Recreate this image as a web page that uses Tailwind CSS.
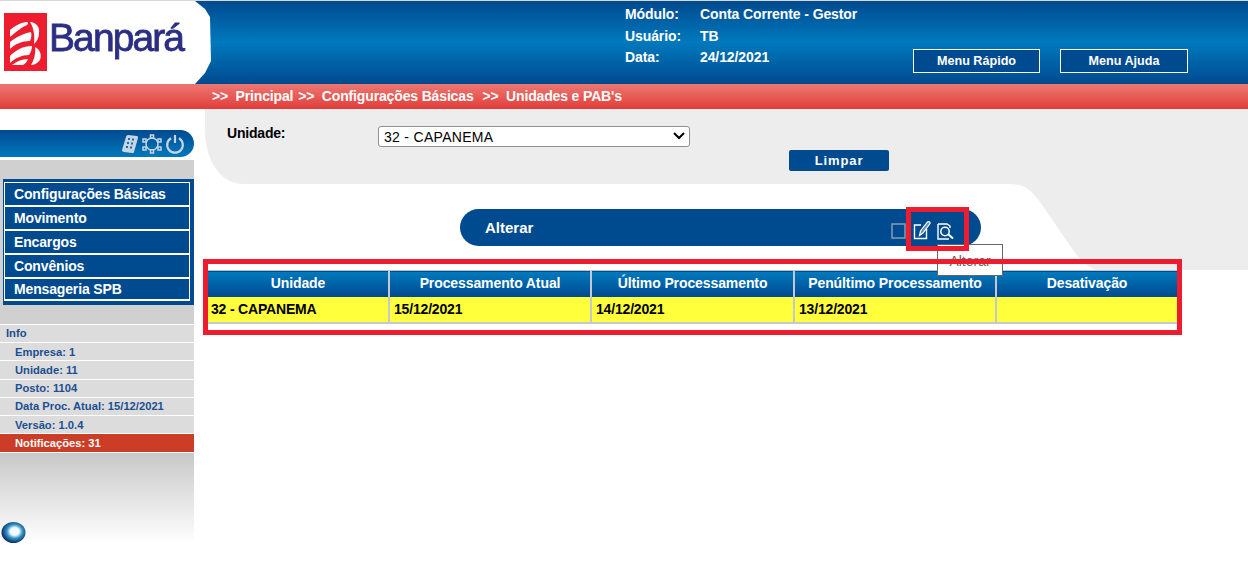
<!DOCTYPE html>
<html lang="en">
<head>
    <meta charset="UTF-8">
    <title>Unidades e PAB's</title>
    <script src="https://cdn.jsdelivr.net/npm/@tailwindcss/browser@4"></script>
</head>
<body class="w-[1248px] h-[561px] overflow-hidden bg-white font-['Liberation_Sans',sans-serif]">
    <!-- header -->
    <header class="h-[84px] border-t border-[#d8d8d8] bg-gradient-to-b from-[#004a8f] via-[#0079bd] to-[#004a8f] flex">
        <div class="w-[211px] bg-white [clip-path:polygon(0_0,195px_0,205px_8px,210px_16px,211px_60px,205px_72px,195px_83px,0_83px)] flex items-start pl-[4px] pt-[12px] shrink-0">
            <svg class="w-[43px] h-[58px] shrink-0" viewBox="0 0 43 58">
                <rect width="43" height="58" fill="#ed1c2e"/>
                <g fill="#fff">
                    <path d="M6 17 C10 13 16 10 22 9 C24 9 25 10 23 12 C18 14 12 19 6 24 Z"/>
                    <path d="M26 9 C32 9 36 14 35 20 C35 25 33 28 30 31 C31 24 30 15 26 9 Z"/>
                    <path d="M6 29 C11 25 18 21 27 19 C28 22 27 26 26 28 C18 28 11 31 6 36 Z"/>
                    <path d="M6 43 C12 37 19 33 28 33 C28 36 27 39 25 42 C18 42 11 45 6 50 Z"/>
                    <path d="M31 34 C36 36 38 42 36 47 C34 50 30 52 27 52 C30 47 32 40 31 34 Z"/>
                    <path d="M8 52 C13 48 18 46 24 46 C23 49 21 51 19 52 Z"/>
                </g>
            </svg>
            <span class="ml-[2px] mt-[2px] text-[39px] leading-[46px] tracking-[-1.9px] text-[#2b2e83] blur-[0.4px] [-webkit-text-stroke:0.8px_#2b2e83]">Banpará</span>
        </div>
        <div class="ml-[414px] pt-[3px] w-[270px] text-[14px] tracking-[-0.1px] font-bold text-white shrink-0">
            <div class="flex h-[21px] items-center"><span class="w-[75px]">Módulo:</span><span>Conta Corrente - Gestor</span></div>
            <div class="flex h-[22px] items-center"><span class="w-[75px]">Usuário:</span><span>TB</span></div>
            <div class="flex h-[21px] items-center"><span class="w-[75px]">Data:</span><span>24/12/2021</span></div>
        </div>
        <div class="ml-[18px] mt-[48px] flex gap-[20px] text-[12.6px] font-bold text-white">
            <button class="w-[127px] h-[24px] bg-[#004a8f] border border-white">Menu Rápido</button>
            <button class="w-[128px] h-[24px] bg-[#004a8f] border border-white">Menu Ajuda</button>
        </div>
    </header>

    <!-- breadcrumb -->
    <nav class="h-[25px] pl-[212px] bg-gradient-to-b from-[#ec7672] to-[#e03b38] flex items-center gap-[5px] text-[14px] tracking-[-0.15px] font-bold text-white whitespace-pre">
        <span>&gt;&gt;  Principal</span>
        <span>&gt;&gt;  Configurações Básicas</span>
        <span class="ml-[4px]">&gt;&gt;  Unidades e PAB's</span>
    </nav>

    <div class="flex">
        <!-- sidebar -->
        <aside class="w-[194px] shrink-0 pt-[21px]">
            <div class="h-[27px] rounded-r-[14px] bg-gradient-to-b from-[#004a8f] to-[#0079bd] flex items-center justify-end pr-[9px] gap-[3px]">
                <svg class="w-[18px] h-[20px]" viewBox="0 0 18 20">
                    <path d="M7 1 L16 2 C17 2 17 3 17 4 L13 18 C13 19 12 19 11 19 L3 18 C2 18 1 17 1 16 L5 3 C5 2 6 1 7 1 Z" fill="#c4d6e6"/>
                    <path d="M7 5 L9 5 M11 5.500 L13 5.500 M6 9 L8 9 M10 9.500 L12 9.500 M5 13 L7 13 M9 13.500 L11 13.500" stroke="#1f6ba8" stroke-width="2"/>
                </svg>
                <svg class="w-[20px] h-[20px]" viewBox="0 0 20 20" fill="none" stroke="#c4d6e6" stroke-width="1.500">
                    <circle cx="10" cy="10" r="6"/>
                    <rect x="8.500" y="1" width="3" height="3" fill="#0a5c9f"/>
                    <rect x="16" y="5" width="3" height="3" fill="#0a5c9f"/>
                    <rect x="16" y="13" width="3" height="3" fill="#0a5c9f"/>
                    <rect x="8.500" y="16" width="3" height="3" fill="#0a5c9f"/>
                    <rect x="1" y="13" width="3" height="3" fill="#0a5c9f"/>
                    <rect x="1" y="5" width="3" height="3" fill="#0a5c9f"/>
                </svg>
                <svg class="w-[20px] h-[20px]" viewBox="0 0 20 20" fill="none" stroke="#c4d6e6" stroke-width="2.200">
                    <path d="M6 4.200 A7.800 7.800 0 1 0 14 4.200"/>
                    <path d="M10 1 V9"/>
                </svg>
            </div>
            <div class="mt-[3px] pt-[19px] pb-[19px] bg-[#d0d0d0]">
                <ul class="ml-[3px] pl-[1px] pr-[4px] pt-[3px] pb-[4px] bg-[#004a8f] text-[14px] tracking-[-0.15px] font-bold text-white">
                    <li class="h-[25px] pl-[9px] flex items-center border-x border-t border-b-2 border-white">Configurações Básicas</li>
                    <li class="h-[24px] pl-[9px] pt-[1px] flex items-center border-x border-b-2 border-white">Movimento</li>
                    <li class="h-[24px] pl-[9px] pt-[1px] flex items-center border-x border-b-2 border-white">Encargos</li>
                    <li class="h-[24px] pl-[9px] pt-[1px] flex items-center border-x border-b-2 border-white">Convênios</li>
                    <li class="h-[22px] pl-[9px] flex items-center border-x border-b-2 border-white">Mensageria SPB</li>
                </ul>
            </div>
            <ul class="text-[11.2px] font-bold text-[#1b4f90] bg-white">
                <li class="h-[18px] pl-[6px] pb-[1px] flex items-center border-t border-white bg-[#dcdcdc]">Info</li>
                <li class="h-[18px] pl-[15px] pt-[1px] flex items-center border-t border-white bg-[#dcdcdc]">Empresa: 1</li>
                <li class="h-[19px] pl-[15px] flex items-center border-t border-white bg-[#dcdcdc]">Unidade: 11</li>
                <li class="h-[18px] pl-[15px] pb-[1px] flex items-center border-t border-white bg-[#dcdcdc]">Posto: 1104</li>
                <li class="h-[18px] pl-[15px] pb-[1px] flex items-center border-t border-white bg-[#dcdcdc]">Data Proc. Atual: 15/12/2021</li>
                <li class="h-[18px] pl-[15px] pt-[1px] flex items-center border-t border-white bg-[#dcdcdc]">Versão: 1.0.4</li>
                <li class="h-[20px] pl-[15px] flex items-center border-y border-white bg-[#cc3d27] text-white">Notificações: 31</li>
            </ul>
            <div class="h-[90px] bg-gradient-to-b from-[#c8c8c8] to-white flex items-end pl-[1px]">
                <svg class="w-[25px] h-[21px]" viewBox="0 0 25 21">
                    <defs>
                        <radialGradient id="orb" cx="0.55" cy="0.45" r="0.6">
                            <stop offset="0.3" stop-color="#f2fafd"/>
                            <stop offset="0.55" stop-color="#2f94c2"/>
                            <stop offset="0.9" stop-color="#0b2f6e"/>
                        </radialGradient>
                    </defs>
                    <ellipse cx="12.500" cy="10.500" rx="12" ry="10.500" fill="url(#orb)"/>
                </svg>
            </div>
        </aside>

        <!-- content -->
        <main class="relative flex-1 h-[452px]">
            <svg class="absolute top-0 left-0 w-[1054px] h-[161px]" viewBox="0 0 1054 161">
                <path d="M11 0 H1054 V161 H906 C896 161 888 152 881 144 L846 93 C836 80 830 75 816 75 H50 C25 75 11 50 11 20 Z" fill="#ededed"/>
            </svg>

            <form class="relative h-[100px] pt-[16px] pl-[33px]">
                <div class="flex items-start">
                    <label class="w-[151px] text-[14px] tracking-[-0.2px] font-bold text-black leading-[16px]">Unidade:</label>
                    <div class="relative w-[312px] h-[21px]">
                        <select class="appearance-none w-full h-full pl-[5px] pb-[2px] bg-white border border-[#8f8f8f] rounded-[3px] text-[14px] tracking-[0.3px] text-black">
                            <option>32 - CAPANEMA</option>
                        </select>
                        <svg class="absolute right-[5px] top-[6px] w-[12px] h-[9px]" viewBox="0 0 12 9" fill="none" stroke="#000" stroke-width="2">
                            <path d="M1 2 L6 7 L11 2"/>
                        </svg>
                    </div>
                </div>
                <button type="button" class="block ml-[562px] mt-[4px] w-[100px] h-[21px] bg-[#004a8f] rounded-[2px] text-[13px] font-bold tracking-[0.9px] text-white">Limpar</button>
            </form>

            <div class="relative ml-[266px] w-[521px] h-[37px] rounded-full bg-[#004a8f] flex items-center pl-[25px] pt-[1px] text-[15px] font-bold text-white">
                <span>Alterar</span>
                <div class="ml-auto mr-[26px] mt-[3px] flex items-center">
                    <svg class="w-[15px] h-[17px] mt-[1px]" viewBox="0 0 15 17" fill="none">
                        <rect x="1" y="2" width="13" height="14" stroke="#7f97ae" stroke-width="1.600"/>
                    </svg>
                    <svg class="ml-[7px] w-[18px] h-[20px]" viewBox="0 0 18 20" fill="none" stroke="#fff">
                        <path d="M8 5 H1.500 V18.500 H13.500 V9" stroke-width="1.400"/>
                        <path d="M6.500 15.500 L7.500 11 L14.500 2 C15.500 1 17.500 2 17 3.500 L10 13 Z" fill="#5f8db8" stroke-width="1.200"/>
                    </svg>
                    <svg class="ml-[6px] w-[18px] h-[20px]" viewBox="0 0 18 20" fill="none" stroke="#fff">
                        <path d="M1 4 H10 L13 6 V8 M1 4 V19 H12" stroke-width="1.400"/>
                        <circle cx="8" cy="11.500" r="4.200" stroke-width="1.500"/>
                        <path d="M11.500 14.500 L16 18.500" stroke-width="2"/>
                    </svg>
                </div>
            </div>

            <table class="relative mt-[24px] ml-[14px] w-[969px] table-fixed border-collapse text-[14px] font-bold">
                <thead>
                    <tr class="h-[26px] bg-gradient-to-b from-[#0079bd] to-[#004a8f] text-white tracking-[-0.1px] border-t border-[#b9c4d0]">
                        <th class="w-[181px] font-bold border-r-2 border-[#c3c8d4]">Unidade</th>
                        <th class="w-[202px] font-bold border-r-2 border-[#c3c8d4]">Processamento Atual</th>
                        <th class="w-[203px] font-bold border-r-2 border-[#c3c8d4]">Último Processamento</th>
                        <th class="w-[202px] font-bold border-r-2 border-[#c3c8d4]">Penúltimo Processamento</th>
                        <th class="font-bold">Desativação</th>
                    </tr>
                </thead>
                <tbody>
                    <tr class="h-[26px] bg-[#ffff3c] text-black tracking-[-0.18px] border-t-0 border-b-2 border-[#c3c8d4]">
                        <td class="pl-[3px] border-r-2 border-[#c3c8d4]">32 - CAPANEMA</td>
                        <td class="pl-[4px] border-r-2 border-[#c3c8d4]">15/12/2021</td>
                        <td class="pl-[4px] border-r-2 border-[#c3c8d4]">14/12/2021</td>
                        <td class="pl-[4px] border-r-2 border-[#c3c8d4]">13/12/2021</td>
                        <td></td>
                    </tr>
                </tbody>
            </table>

            <!-- tooltip and red annotation boxes -->
            <div class="absolute left-[743px] top-[135px] w-[66px] h-[32px] pt-[6px] bg-white border border-[#666] text-center text-[14px] text-[#666]">Alterar</div>
            <div class="absolute left-[9px] top-[150px] w-[979px] h-[76px] border-[5px] border-[#ed1c2e]"></div>
            <div class="absolute left-[712px] top-[98px] w-[63px] h-[44px] border-[5px] border-[#ed1c2e]"></div>
        </main>
    </div>
</body>
</html>
